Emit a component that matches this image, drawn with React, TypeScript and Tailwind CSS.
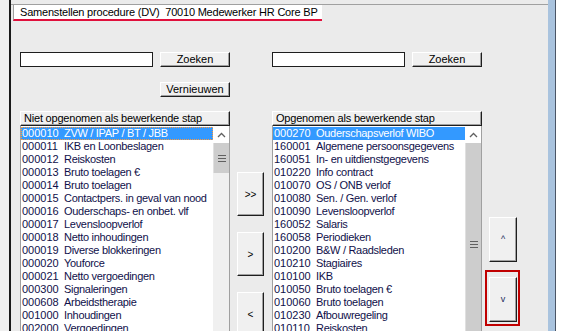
import React from "react";

const leftRows: [string, string][] = [
  ["000010", "ZVW / IPAP / BT / JBB"],
  ["000011", "IKB en Loonbeslagen"],
  ["000012", "Reiskosten"],
  ["000013", "Bruto toelagen €"],
  ["000014", "Bruto toelagen"],
  ["000015", "Contactpers. in geval van nood"],
  ["000016", "Ouderschaps- en onbet. vlf"],
  ["000017", "Levensloopverlof"],
  ["000018", "Netto inhoudingen"],
  ["000019", "Diverse blokkeringen"],
  ["000020", "Youforce"],
  ["000021", "Netto vergoedingen"],
  ["000300", "Signaleringen"],
  ["000608", "Arbeidstherapie"],
  ["001000", "Inhoudingen"],
  ["002000", "Vergoedingen"],
];

const rightRows: [string, string][] = [
  ["000270", "Ouderschapsverlof WIBO"],
  ["160001", "Algemene persoonsgegevens"],
  ["160051", "In- en uitdienstgegevens"],
  ["010220", "Info contract"],
  ["010070", "OS / ONB verlof"],
  ["010080", "Sen. / Gen. verlof"],
  ["010090", "Levensloopverlof"],
  ["160052", "Salaris"],
  ["160058", "Periodieken"],
  ["010200", "B&W / Raadsleden"],
  ["010210", "Stagiaires"],
  ["010100", "IKB"],
  ["010050", "Bruto toelagen €"],
  ["010060", "Bruto toelagen"],
  ["010230", "Afbouwregeling"],
  ["010110", "Reiskosten"],
];

const btn =
  "bg-[#f0f0f0] border border-t-white border-l-white border-r-[#1e1e1e] border-b-[#1e1e1e] shadow-[inset_-1px_-1px_0_#a0a0a0] flex items-center justify-center";

function Row({ code, label, selected, focus }: { code: string; label: string; selected?: boolean; focus?: boolean }) {
  return (
    <div
      className={
        selected
          ? focus
            ? "h-[13px] leading-[13px] whitespace-nowrap pl-[1px] tracking-[-0.3px] bg-[#3399ff] text-white outline-1 outline-dotted outline-[#ff9a3c] -outline-offset-1"
            : "h-[13px] leading-[13px] whitespace-nowrap pl-[1px] tracking-[-0.3px] bg-[#3399ff] text-white"
          : "h-[13px] leading-[13px] whitespace-nowrap pl-[1px] tracking-[-0.3px] text-[#10104a]"
      }
    >
      <span className="inline-block w-[42px] tracking-normal">{code}</span>
      {label}
    </div>
  );
}

function Grip() {
  return (
    <svg width="8" height="7" viewBox="0 0 8 7">
      <rect x="0" y="0" width="8" height="1" fill="#606060" />
      <rect x="0" y="3" width="8" height="1" fill="#606060" />
      <rect x="0" y="6" width="8" height="1" fill="#606060" />
    </svg>
  );
}

function ScrollBar({ big }: { big?: boolean }) {
  return (
    <div className="w-[17px] flex flex-col bg-[#f0f0f0] border-r border-[#a0a0a0]">
      <div className="h-[17px] bg-white flex items-center justify-center">
        <svg width="9" height="6" viewBox="0 0 9 6">
          <path d="M1 5 L4.5 1.5 L8 5" fill="none" stroke="#606060" strokeWidth="1.3" />
        </svg>
      </div>
      {big ? (
        <div className="flex-1 bg-[#cdcdcd] border-l border-[#e0e0e0] flex items-start justify-center pt-[98px]">
          <Grip />
        </div>
      ) : (
        <div className="h-[30px] bg-[#cdcdcd] border-l border-[#e0e0e0] flex items-center justify-center">
          <Grip />
        </div>
      )}
    </div>
  );
}

function ListBox({ title, rows, left }: { title: string; rows: [string, string][]; left?: boolean }) {
  return (
    <div className="flex flex-col">
      <div className={btn + " h-[15px] w-[210px] !justify-start pl-[3px] leading-[13px] tracking-[-0.2px]"}>{title}</div>
      <div className="flex h-[230px] border-l border-[#a0a0a0]">
        <div className="w-[192px] bg-white overflow-hidden pt-[1px]">
          {rows.map((r, i) => (
            <Row key={r[0]} code={r[0]} label={r[1]} selected={i === 0} focus={left && i === 0} />
          ))}
        </div>
        <ScrollBar big={!left} />
      </div>
    </div>
  );
}

function SearchRow() {
  return (
    <div className="flex">
      <div className="w-[133px] h-[15px] bg-white border border-[#1e1e1e]" />
      <div className={btn + " ml-[7px] w-[70px] h-[15px] leading-[13px]"}>Zoeken</div>
    </div>
  );
}

export default function App() {
  return (
    <div className="w-[566px] h-[331px] overflow-hidden flex bg-[#ebebeb] font-['Liberation_Sans',Arial,sans-serif] text-[11px] text-black">
      <div className="w-[9px] shrink-0 bg-[#f0f0f0]" />
      <div className="w-[2px] shrink-0 bg-[#1a1a1a]" />
      <div className="w-[537px] shrink-0 flex flex-col">
        <div className="h-[4px] shrink-0" />
        <div className="h-[1px] shrink-0 bg-[#a0a0a0]" />
        <div className="ml-[2px] w-fit h-[16px] shrink-0 bg-white border-l border-[#a0a0a0] border-b-2 border-b-[#e0103c] pl-[6px] pr-[4px] pt-[1px] leading-[13px] whitespace-nowrap tracking-[-0.2px]">
          Samenstellen procedure (DV)&nbsp; 70010 Medewerker HR Core BP
        </div>
        <div className="flex pl-[9px]">
          {/* left panel */}
          <div className="w-[210px] flex flex-col pt-[31px]">
            <SearchRow />
            <div className={btn + " self-end mt-[15px] w-[70px] h-[15px] leading-[13px]"}>Vernieuwen</div>
            <div className="h-[14px]" />
            <ListBox title="Niet opgenomen als bewerkende stap" rows={leftRows} left />
          </div>
          {/* middle buttons */}
          <div className="w-[42px] flex flex-col gap-[16px] pl-[7px] pt-[151px]">
            <div className={btn + " w-[27px] h-[44px] text-[10px]"}>&gt;&gt;</div>
            <div className={btn + " w-[27px] h-[44px] text-[10px]"}>&gt;</div>
            <div className={btn + " w-[27px] h-[44px] text-[10px]"}>&lt;</div>
          </div>
          {/* right panel */}
          <div className="w-[210px] flex flex-col pt-[31px]">
            <SearchRow />
            <div className="mt-[15px] h-[15px]" />
            <div className="h-[14px]" />
            <ListBox title="Opgenomen als bewerkende stap" rows={rightRows} />
          </div>
          {/* order buttons */}
          <div className="w-[66px] flex flex-col gap-[15px] pl-[7px] pt-[196px]">
            <div className={btn + " w-[28px] h-[45px] text-[9px] text-[#1a2a5a]"}>^</div>
            <div className="relative w-[28px] h-[45px]">
              <div className={btn + " w-[28px] h-[45px] text-[9px] text-[#1a2a5a] shadow-[0_0_6px_2px_rgba(0,0,0,0.22),inset_-1px_-1px_0_#a0a0a0]"}>v</div>
              <div className="absolute left-[-4px] top-[-7px] w-[35px] h-[56px] border-2 border-[#c00000]" />
            </div>
          </div>
        </div>
      </div>
      <div className="w-[7px] shrink-0 bg-[#a9c3de]" />
      <div className="w-[1px] shrink-0 bg-[#4a5566]" />
      <div className="w-[10px] shrink-0 bg-white" />
    </div>
  );
}
